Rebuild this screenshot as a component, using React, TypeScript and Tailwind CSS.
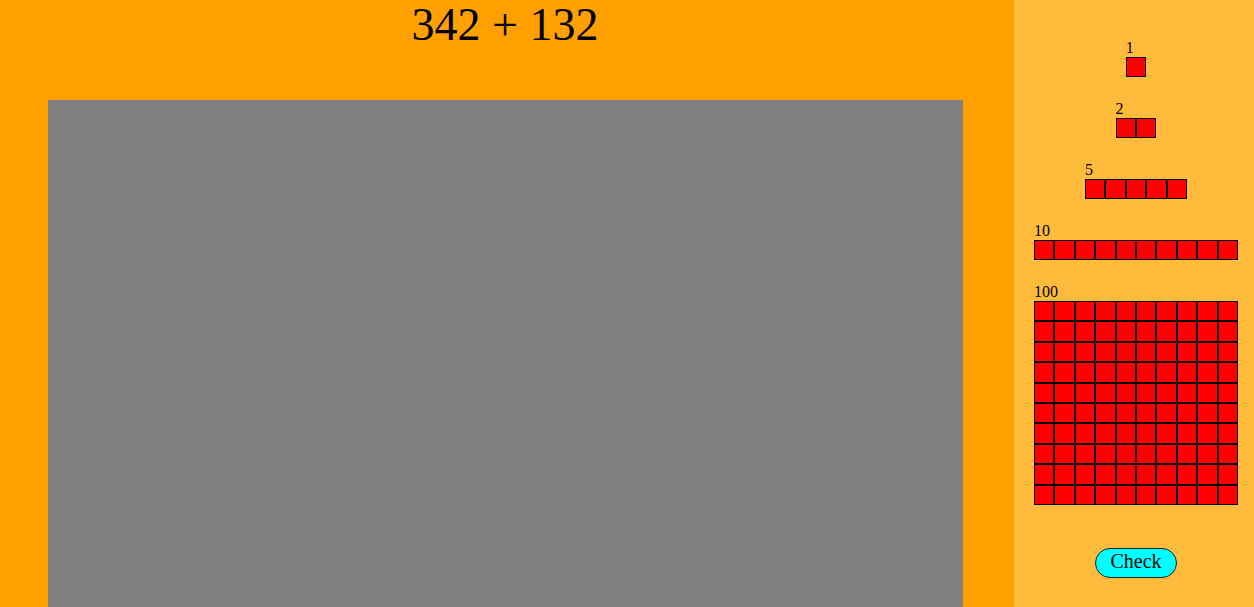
import React from "react";

const serif = { fontFamily: '"Liberation Serif", "Times New Roman", serif' };

function Row({ n, h = "h-[20px]" }: { n: number; h?: string }) {
  return (
    <div className="flex">
      {Array.from({ length: n }).map((_, i) => (
        <div key={i} className={`w-[20.4px] ${h} bg-[#ff0000] border border-black`} />
      ))}
    </div>
  );
}

function Group({ label, n, rows = 1 }: { label: string; n: number; rows?: number }) {
  return (
    <div className="flex flex-col items-start">
      <div className="text-[16px] leading-[18px] text-black">{label}</div>
      <div className="flex flex-col">
        {Array.from({ length: rows }).map((_, r) => (
          <Row key={r} n={n} h={rows > 1 ? "h-[20.4px]" : "h-[20px]"} />
        ))}
      </div>
    </div>
  );
}

export default function App() {
  return (
    <div className="flex w-[1254px] h-[607px] overflow-hidden" style={serif}>
      <div className="w-[1014px] h-full bg-[#ffa000] flex flex-col">
        <div className="h-[100px] shrink-0 pr-[4px] text-center text-[46px] leading-[49px] text-black">342 + 132</div>
        <div className="ml-[48px] w-[915px] h-[520px] shrink-0 bg-[#808080]" />
      </div>
      <div className="w-[240px] h-full bg-[#ffbb3b] pl-[4px] pt-[39px] flex flex-col items-center">
        <div className="flex flex-col items-center gap-[23px]">
          <Group label="1" n={1} />
          <Group label="2" n={2} />
          <Group label="5" n={5} />
          <Group label="10" n={10} />
          <Group label="100" n={10} rows={10} />
        </div>
        <button className="mt-[43px] w-[82px] h-[30px] pb-[4px] rounded-full bg-[#00ffff] border border-[#222] text-[20px] leading-[20px] text-black flex items-center justify-center">
          Check
        </button>
      </div>
    </div>
  );
}
